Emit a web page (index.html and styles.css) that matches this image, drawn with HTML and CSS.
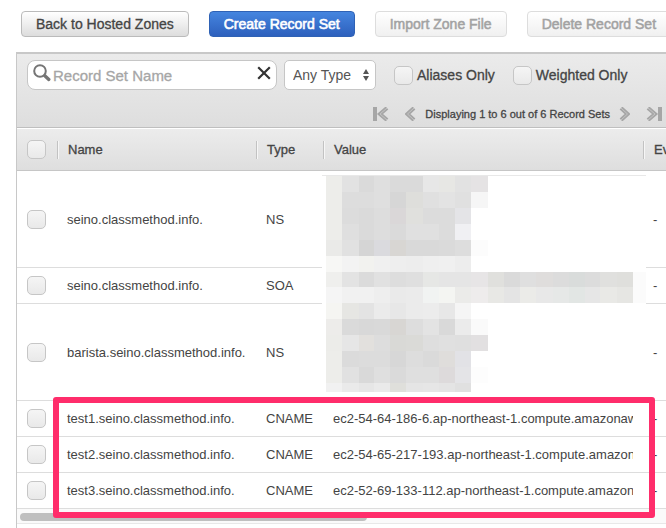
FILE: index.html
```html
<!DOCTYPE html>
<html lang="en">
<head>
  <meta charset="UTF-8">
  <meta name="viewport" content="width=device-width, initial-scale=1.0">
  <title>Hosted Zone Record Sets</title>
  <link rel="stylesheet" href="styles.css">
</head>
<body>
  <div class="actions">
    <button type="button" class="btn">Back to Hosted Zones</button>
    <button type="button" class="btn btn-primary">Create Record Set</button>
    <button type="button" class="btn" disabled>Import Zone File</button>
    <button type="button" class="btn" disabled>Delete Record Set</button>
  </div>

  <div class="panel">
    <div class="toolbar">
      <div class="filters">
        <div class="search">
          <svg class="search-icon" width="18" height="18" viewBox="0 0 18 18" aria-hidden="true">
            <circle cx="7" cy="7" r="5.8" fill="none" stroke="#757575" stroke-width="2"/>
            <path d="M11.8 11.8L15.8 15.4" stroke="#757575" stroke-width="3.4" stroke-linecap="round"/>
          </svg>
          <input type="text" id="recordName" placeholder="Record Set Name" aria-label="Record Set Name">
          <button type="button" class="clear" aria-label="Clear">
            <svg width="14" height="14" viewBox="0 0 14 14"><path d="M1.2 1.2L12.8 12.8M12.8 1.2L1.2 12.8" stroke="#333" stroke-width="2.2"/></svg>
          </button>
        </div>
        <div class="type-select">
          <select id="recordType" aria-label="Record type">
            <option>Any Type</option>
            <option>NS</option>
            <option>SOA</option>
            <option>CNAME</option>
          </select>
          <svg class="arrows" width="8" height="14" viewBox="0 0 8 14" aria-hidden="true"><path d="M4 1L7 6H1zM4 13L1 8H7z" fill="#555"/></svg>
        </div>
        <label class="check"><input type="checkbox" id="aliases"> Aliases Only</label>
        <label class="check"><input type="checkbox" id="weighted"> Weighted Only</label>
      </div>
      <div class="pager">
        <button type="button" aria-label="First page">
          <svg width="16" height="14" viewBox="0 0 16 14"><path d="M0 0h4v14H0z" fill="#a6a6a6"/><path d="M14 1L7 7L14 13" fill="none" stroke="#a6a6a6" stroke-width="4"/><path d="M14 1L7 7L14 13" fill="none" stroke="#c4c4c4" stroke-width="1"/></svg>
        </button>
        <button type="button" class="prev" aria-label="Previous page">
          <svg width="11" height="14" viewBox="0 0 11 14"><path d="M9 1L2.5 7L9 13" fill="none" stroke="#a6a6a6" stroke-width="4"/><path d="M9 1L2.5 7L9 13" fill="none" stroke="#c4c4c4" stroke-width="1"/></svg>
        </button>
        <span>Displaying 1 to 6 out of 6 Record Sets</span>
        <button type="button" class="next" aria-label="Next page">
          <svg width="11" height="14" viewBox="0 0 11 14"><path d="M2 1L8.5 7L2 13" fill="none" stroke="#a6a6a6" stroke-width="4"/><path d="M2 1L8.5 7L2 13" fill="none" stroke="#c4c4c4" stroke-width="1"/></svg>
        </button>
        <button type="button" aria-label="Last page">
          <svg width="16" height="14" viewBox="0 0 16 14"><path d="M12 0h4v14h-4z" fill="#a6a6a6"/><path d="M2 1L9 7L2 13" fill="none" stroke="#a6a6a6" stroke-width="4"/><path d="M2 1L9 7L2 13" fill="none" stroke="#c4c4c4" stroke-width="1"/></svg>
        </button>
      </div>
    </div>

    <div class="records">
      <table>
        <colgroup>
          <col class="col-check"><col class="col-name"><col class="col-type"><col class="col-value"><col class="col-eval">
        </colgroup>
        <thead>
          <tr>
            <th><input type="checkbox" aria-label="Select all"></th>
            <th><span>Name</span></th>
            <th><span>Type</span></th>
            <th><span>Value</span></th>
            <th><span>Evaluate Target Health</span></th>
          </tr>
        </thead>
        <tbody>
          <tr class="tall">
            <td><input type="checkbox" aria-label="Select seino NS"></td>
            <td>seino.classmethod.info.</td>
            <td>NS</td>
            <td></td>
            <td>-</td>
          </tr>
          <tr>
            <td><input type="checkbox" aria-label="Select seino SOA"></td>
            <td>seino.classmethod.info.</td>
            <td>SOA</td>
            <td></td>
            <td>-</td>
          </tr>
          <tr class="tall">
            <td><input type="checkbox" aria-label="Select barista NS"></td>
            <td>barista.seino.classmethod.info.</td>
            <td>NS</td>
            <td></td>
            <td>-</td>
          </tr>
          <tr>
            <td><input type="checkbox" aria-label="Select test1"></td>
            <td>test1.seino.classmethod.info.</td>
            <td>CNAME</td>
            <td><div class="value">ec2-54-64-186-6.ap-northeast-1.compute.amazonaws.com</div></td>
            <td>-</td>
          </tr>
          <tr>
            <td><input type="checkbox" aria-label="Select test2"></td>
            <td>test2.seino.classmethod.info.</td>
            <td>CNAME</td>
            <td><div class="value">ec2-54-65-217-193.ap-northeast-1.compute.amazonaws.com</div></td>
            <td>-</td>
          </tr>
          <tr>
            <td><input type="checkbox" aria-label="Select test3"></td>
            <td>test3.seino.classmethod.info.</td>
            <td>CNAME</td>
            <td><div class="value">ec2-52-69-133-112.ap-northeast-1.compute.amazonaws.com</div></td>
            <td>-</td>
          </tr>
        </tbody>
      </table>
      <svg id="mosaic" class="mosaic" width="324" height="222" viewBox="0 0 324 222" shape-rendering="crispEdges" aria-label="Hidden values"></svg>
      <div class="scrollbar"><div class="thumb"></div></div>
      <div class="highlight"></div>
    </div>
  </div>

  <script src="mosaic.js"></script>
</body>
</html>
```
FILE: mosaic.js
```js
// One line per row of blocks, grey level or full colour for each block
const rows = [
  'ededea e2 da df da da e7 e7e7e4 e2 e5e3e4',
  'ededea dd dd df d6 dededb e0 e3 e0 f6',
  'ededea dc da dd dad7d8 e0e0dd dc dc e4e4e7',
  'ededea df da dd da e0 e0 dc f0f0f3',
  'eaeae8 e1 d5 dadade d8d6d3 d9 d9 da dd fc',
  'f7f7f5 f3 f2f2ef f0 ee ed ef f0 ed',
  'efefed e3 db e1 dd df e6e7e5 e5 e5 e7e5e6 e0e0dd da df dfdddc dc d9dcdb dc e0e0de dfdfdc fb',
  'f5 f1 f1 ee ea eb f1f3f2 f4f5f2 ebebe9 eeecec e8e8e5 e4 ebebe8 e8 e6e8e7 e2e6e4 e6 e9e9e6 e6e6e3 fb',
  'f5f5f2 e6e6e3 e3 eb e7 eb ec e7 f5',
  'edecea da d8 d9 d8d6d3 dd e3 d9 eb fa',
  'ecece9 e6 e2e0dd dd d9d9d6 dadad7 de e0 df e2e0e1',
  'ededea db dc dc d7 dd da dfdddb e2e2e6',
  'ededea e1 d9 df da df df dddadb e4e4e7 fd',
  'f1 ea e6 ea dfdfdb e5 e6 e4 e0'
];

const svg = document.querySelector('#mosaic');
const colWidth = 16.25;
const rowHeight = 16;

rows.forEach((row, r) => {
  row.split(' ').forEach((level, c) => {
    const x = Math.round(c * colWidth) + 3;
    const next = Math.round((c + 1) * colWidth) + 3;
    const rect = document.createElementNS('http://www.w3.org/2000/svg', 'rect');
    rect.setAttribute('x', x);
    rect.setAttribute('y', r * rowHeight);
    rect.setAttribute('width', next - x);
    rect.setAttribute('height', r === rows.length - 1 ? 9 : rowHeight);
    rect.setAttribute('fill', '#' + (level.length === 2 ? level.repeat(3) : level));
    svg.appendChild(rect);
  });
});
```
FILE: styles.css
```css
* {
  margin: 0;
  padding: 0;
  box-sizing: border-box;
  font-family: 'Liberation Sans', Arial, sans-serif;
}

body {
  background: #fff;
  color: #444;
  font-size: 13px;
  overflow: hidden;
}

.actions {
  display: flex;
  gap: 20px;
  padding: 11px 0 15px 21px;
}

.btn {
  flex: none;
  height: 26px;
  padding: 0 14px;
  border: 1px solid #bbb;
  border-radius: 4px;
  background: linear-gradient(#fff, #ddd);
  color: #444;
  font-size: 14px;
  -webkit-text-stroke: 0.3px;
  white-space: nowrap;
  cursor: pointer;
}

.btn-primary {
  border-color: #2f62b5;
  background: linear-gradient(#4585df, #2d60bd);
  color: #fff;
  -webkit-text-stroke: 0.6px;
}

.btn:disabled {
  border-color: #ddd;
  background: linear-gradient(#fff, #f0f0f0);
  color: #a2a2a2;
  -webkit-text-stroke: 0.5px;
}

.panel {
  margin-left: 16px;
  min-height: calc(100vh - 52px);
  border-top: 2px solid #c8c8c8;
  border-left: 1px solid #c8c8c8;
  overflow: hidden;
}

.toolbar {
  padding: 6px 4px 4px 10px;
  background: linear-gradient(#ebebeb, #dedede);
  border-bottom: 1px solid #bfbfbf;
}

.filters {
  display: flex;
  align-items: center;
}

.search {
  display: flex;
  align-items: center;
  width: 250px;
  height: 30px;
  margin-right: 7px;
  padding: 0 5px;
  border: 1px solid #c6c6c6;
  border-radius: 8px;
  background: #fff;
}

.search-icon {
  flex: none;
  margin-bottom: 4px;
}

.search input {
  flex: 1;
  min-width: 0;
  padding-left: 2px;
  border: none;
  outline: none;
  background: none;
  font-size: 15px;
}

.search input::placeholder {
  color: #a6a6a6;
  -webkit-text-stroke: 0.3px;
}

.clear,
.pager button {
  display: flex;
  border: none;
  background: none;
  cursor: pointer;
}

.clear {
  margin-bottom: 4px;
}

.type-select {
  position: relative;
  margin-right: 18px;
}

.type-select select {
  display: block;
  width: 92px;
  height: 30px;
  padding-left: 8px;
  appearance: none;
  border: 1px solid #c6c6c6;
  border-radius: 5px;
  background: #fff;
  color: #555;
  font-size: 14px;
}

.arrows {
  position: absolute;
  top: 8px;
  right: 6px;
  pointer-events: none;
}

.check {
  display: flex;
  align-items: center;
  gap: 4px;
  margin-right: 18px;
  font-size: 14px;
  -webkit-text-stroke: 0.3px;
  white-space: nowrap;
}

input[type="checkbox"] {
  display: block;
  flex: none;
  width: 19px;
  height: 19px;
  appearance: none;
  border: 1px solid #c6c6c6;
  border-radius: 5px;
  background: linear-gradient(#f5f5f5, #e9e9e9);
}

.pager {
  display: flex;
  align-items: center;
  justify-content: flex-end;
  height: 14px;
  margin-top: 17px;
  margin-bottom: 2px;
  font-size: 11px;
  -webkit-text-stroke: 0.3px;
  white-space: nowrap;
}

.pager .prev {
  margin: 0 9px 0 16px;
}

.pager .next {
  margin: 0 16px 0 9px;
}

.records {
  position: relative;
}

table {
  width: 826px;
  table-layout: fixed;
  border-spacing: 0;
}

.col-check {
  width: 40px;
}

.col-name {
  width: 199px;
}

.col-type {
  width: 67px;
}

.col-value {
  width: 320px;
}

th {
  height: 43px;
  background: linear-gradient(#ececec, #dedede);
  border-top: 1px solid #fff;
  border-bottom: 1px solid #c6c6c6;
  font-weight: normal;
  -webkit-text-stroke: 0.3px;
  text-align: left;
}

th span {
  display: block;
  padding-left: 10px;
  border-left: 1px solid #c2c2c2;
  box-shadow: inset 1px 0 #f6f6f6;
  line-height: 18px;
  white-space: nowrap;
}

td {
  height: 36px;
  padding-left: 10px;
  border-bottom: 1px solid #ddd;
  white-space: nowrap;
}

th:first-child {
  padding-left: 10px;
}

.tall td {
  height: 97px;
}

.value {
  width: 300px;
  overflow: hidden;
}

/* covers the values of the first three rows */
.mosaic {
  position: absolute;
  top: 47px;
  left: 305px;
  background: #fff;
  border-top: 1px solid #e8e8e8;
}

.scrollbar {
  height: 15px;
  padding: 4px 3px;
  background: #fafafa;
  border-bottom: 1px solid #e8e8e8;
}

.thumb {
  width: 54%;
  height: 8px;
  border-radius: 4px;
  background: #bfbfbf;
}

.highlight {
  position: absolute;
  top: 269px;
  left: 36px;
  width: 602px;
  height: 121px;
  border: 6px solid #ff2d6b;
  border-radius: 3px;
  pointer-events: none;
}
```
